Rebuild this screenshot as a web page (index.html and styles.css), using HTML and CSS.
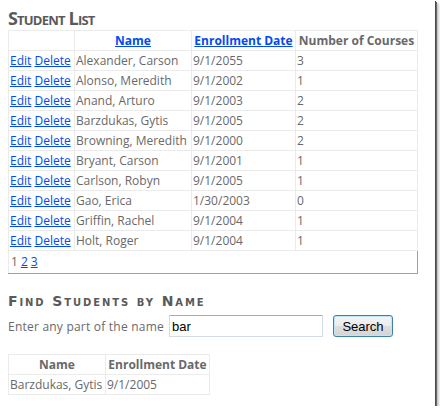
FILE: index.html
```html
<!DOCTYPE html>
<html>
<head>
<meta charset="utf-8">
<link rel="stylesheet" href="styles.css">
</head>
<body>
<div class="page">
  <h2 class="title">Student List</h2>
  <table class="grid main">
    <colgroup><col class="m1"><col class="m2"><col class="m3"><col class="m4"></colgroup>
    <thead>
      <tr><th></th><th><a href="#">Name</a></th><th><a href="#">Enrollment Date</a></th><th>Number of Courses</th></tr>
    </thead>
    <tbody>
      <tr><td><a href="#">Edit</a> <a href="#">Delete</a></td><td>Alexander, Carson</td><td>9/1/2055</td><td>3</td></tr>
      <tr><td><a href="#">Edit</a> <a href="#">Delete</a></td><td>Alonso, Meredith</td><td>9/1/2002</td><td>1</td></tr>
      <tr><td><a href="#">Edit</a> <a href="#">Delete</a></td><td>Anand, Arturo</td><td>9/1/2003</td><td>2</td></tr>
      <tr><td><a href="#">Edit</a> <a href="#">Delete</a></td><td>Barzdukas, Gytis</td><td>9/1/2005</td><td>2</td></tr>
      <tr><td><a href="#">Edit</a> <a href="#">Delete</a></td><td>Browning, Meredith</td><td>9/1/2000</td><td>2</td></tr>
      <tr><td><a href="#">Edit</a> <a href="#">Delete</a></td><td>Bryant, Carson</td><td>9/1/2001</td><td>1</td></tr>
      <tr><td><a href="#">Edit</a> <a href="#">Delete</a></td><td>Carlson, Robyn</td><td>9/1/2005</td><td>1</td></tr>
      <tr><td><a href="#">Edit</a> <a href="#">Delete</a></td><td>Gao, Erica</td><td>1/30/2003</td><td>0</td></tr>
      <tr><td><a href="#">Edit</a> <a href="#">Delete</a></td><td>Griffin, Rachel</td><td>9/1/2004</td><td>1</td></tr>
      <tr><td><a href="#">Edit</a> <a href="#">Delete</a></td><td>Holt, Roger</td><td>9/1/2004</td><td>1</td></tr>
    </tbody>
    <tfoot>
      <tr class="pager"><td colspan="4"><span class="pg">1</span><a class="pg" href="#">2</a><a class="pg" href="#">3</a></td></tr>
    </tfoot>
  </table>

  <h2 class="title sub">Find Students by Name</h2>
  <div class="search">
    <label class="lbl">Enter any part of the name</label>
    <input class="box" type="text" value="bar">
    <button class="btn">Search</button>
  </div>

  <table class="grid result">
    <colgroup><col class="r1"><col class="r2"></colgroup>
    <thead><tr><th>Name</th><th>Enrollment Date</th></tr></thead>
    <tbody><tr><td>Barzdukas, Gytis</td><td>9/1/2005</td></tr></tbody>
  </table>
</div>
</body>
</html>
```
FILE: styles.css
```css
html, body {
  margin: 0;
  background: #fff;
}
.page {
  width: 435px;
  height: 406px;
  box-sizing: border-box;
  padding: 0 0 0 8px;
  background: #fff;
  box-shadow: 1px 1px 0 #4a4a4a, 2px 2px 0 #6a6a6a, 3px 3px 3px rgba(0,0,0,0.35);
  font-family: "Open Sans", "DejaVu Sans", sans-serif;
  font-size: 12px;
  color: #696969;
  overflow: hidden;
}
.title {
  margin: 0;
  padding-top: 6px;
  font-size: 18px;
  line-height: 24px;
  font-weight: bold;
  font-variant: small-caps;
  letter-spacing: -0.8px;
  color: #5a5a5a;
}
.title.sub {
  padding-top: 17px;
  font-family: "DejaVu Sans", sans-serif;
  font-size: 14px;
  line-height: 20px;
  letter-spacing: 1.9px;
}
a {
  color: #034af3;
  text-decoration: underline;
}
.grid {
  border-collapse: collapse;
  table-layout: fixed;
  border-top: 1px solid #ebebeb;
  border-left: 1px solid #ebebeb;
  border-right: 1px solid #a0a0a0;
  border-bottom: 1px solid #a0a0a0;
}
.grid th, .grid td {
  border: 1px solid #ebebeb;
  padding: 0 1px;
  height: 19px;
  line-height: 18px;
  white-space: nowrap;
  overflow: hidden;
}
.grid th {
  font-weight: bold;
  text-align: center;
}
.m1 { width: 66px; }
.m2 { width: 117px; }
.m3 { width: 104px; }
.m4 { width: 122px; }
.pager td {
  height: 22px;
  text-align: left;
  padding-left: 2px;
  border-right: 1px solid #a0a0a0;
  border-bottom: 1px solid #a0a0a0;
}
.pg { margin-right: 3px; }
.search {
  display: flex;
  align-items: center;
  margin-top: 4px;
}
.lbl {
  margin-right: 5px;
  letter-spacing: 0.22px;
}
.box {
  width: 154px;
  height: 22px;
  box-sizing: border-box;
  margin: 0;
  padding: 0 2px;
  border: 1px solid #d4dbe3;
  border-top-color: #a5acb5;
  border-radius: 1px;
  font-family: "Liberation Sans", sans-serif;
  font-size: 13px;
  color: #000;
  outline: none;
}
.btn {
  margin: 0 0 0 10px;
  width: 60px;
  height: 22px;
  box-sizing: border-box;
  padding: 0;
  border: 1px solid #3c7fb1;
  border-radius: 3px;
  background: linear-gradient(#f4f4f4 0%, #ececec 48%, #dedede 52%, #d4d4d4 100%);
  box-shadow: inset 0 0 0 1px #bfe6f8;
  font-family: "Liberation Sans", sans-serif;
  font-size: 13px;
  color: #000;
}
.result { margin-top: 17px; }
.r1 { width: 97px; }
.r2 { width: 104px; }
```
